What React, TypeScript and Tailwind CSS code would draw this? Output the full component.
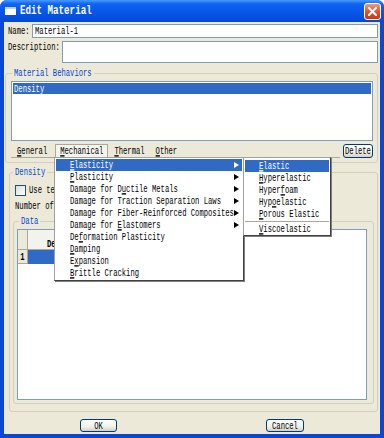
import clsx from "clsx";
import type { ReactNode } from "react";

function T({ children, className }: { children: ReactNode; className?: string }) {
  return (
    <span className={clsx("inline-block scale-y-[1.4] whitespace-pre", className)}>
      {children}
    </span>
  );
}

function Mn({ pre = "", u = "", post = "" }: { pre?: string; u?: string; post?: string }) {
  return (
    <T>
      {pre}
      {u && <u className="underline decoration-1 underline-offset-1">{u}</u>}
      {post}
    </T>
  );
}

interface MenuItem {
  pre?: string;
  u?: string;
  post?: string;
  arrow?: boolean;
  active?: boolean;
}

const MAIN_ITEMS: MenuItem[] = [
  { u: "E", post: "lasticity", arrow: true, active: true },
  { u: "P", post: "lasticity", arrow: true },
  { pre: "Damage for D", u: "u", post: "ctile Metals", arrow: true },
  { pre: "Damage for Traction Separation Laws", arrow: true },
  { pre: "Damage for Fiber-Reinforced Composites", arrow: true },
  { pre: "Damage for ", u: "E", post: "lastomers", arrow: true },
  { pre: "De", u: "f", post: "ormation Plasticity" },
  { u: "D", post: "amping" },
  { pre: "E", u: "x", post: "pansion" },
  { u: "B", post: "rittle Cracking" },
];

const SUB_ITEMS: MenuItem[] = [
  { u: "E", post: "lastic", active: true },
  { u: "H", post: "yperelastic" },
  { pre: "Hyper", u: "f", post: "oam" },
  { pre: "Hyp", u: "o", post: "elastic" },
  { u: "P", post: "orous Elastic" },
];

function Row({ item }: { item: MenuItem }) {
  return (
    <div
      className={clsx(
        "relative h-[12px] flex items-center pl-[14px]",
        item.active ? "bg-[#316AC5] text-white" : "text-black"
      )}
    >
      <Mn pre={item.pre} u={item.u} post={item.post} />
      {item.arrow && (
        <span
          className={clsx(
            "absolute right-[3px] top-[3px] w-0 h-0 border-l-[5px] border-y-[3px] border-y-transparent",
            item.active ? "border-l-white" : "border-l-black"
          )}
        />
      )}
    </div>
  );
}

function XpButton({ label, className }: { label: string; className?: string }) {
  return (
    <div
      className={clsx(
        "h-[13px] flex items-center justify-center rounded-[3px] border border-[#003C74] bg-[linear-gradient(to_bottom,#FFFFFF,#F0F0EA_60%,#D6D0C5)]",
        className
      )}
    >
      <T>{label}</T>
    </div>
  );
}

export default function App() {
  return (
    <div className="relative w-[384px] h-[438px] flex flex-col bg-[#0A46D8] rounded-t-[7px] font-['Liberation_Mono',monospace] text-[7.2px] leading-[12px] text-black overflow-hidden">
      <div className="h-[22px] shrink-0 flex items-center bg-[linear-gradient(to_bottom,#4A9BFF_0%,#0F62F2_18%,#0657E8_55%,#0349D6_100%)]">
        <div className="ml-[5px] w-[11px] h-[8px] bg-white border-t-2 border-[#BFD4FF]" />
        <span className="ml-[4px] text-white font-bold text-[9.2px]">
          <T className="scale-y-[1.3]">Edit Material</T>
        </span>
        <div className="ml-auto mr-[3px] w-[17px] h-[17px] rounded-[3px] border border-white bg-[linear-gradient(to_bottom,#F09A7C,#E2552F_50%,#C43A17)] flex items-center justify-center">
          <svg width="9" height="9" viewBox="0 0 9 9">
            <path d="M1 1 L8 8 M8 1 L1 8" stroke="white" strokeWidth="2" strokeLinecap="square" />
          </svg>
        </div>
      </div>

      <div className="flex-1 mx-[4px] mb-[4px] bg-[#ECE9D8] flex flex-col">
        <div className="mt-[2px] h-[14px] flex items-center">
          <span className="ml-[4px] w-[24px]">
            <T>Name:</T>
          </span>
          <div className="w-[346px] h-[14px] border border-[#7F9DB9] bg-white flex items-center pl-[2px]">
            <T>Material-1</T>
          </div>
        </div>

        <div className="mt-[3px] h-[22px] flex items-start">
          <span className="ml-[4px] w-[54px]">
            <T>Description:</T>
          </span>
          <div className="w-[316px] h-[22px] border border-[#7F9DB9] bg-white" />
        </div>

        <fieldset className="mt-[5px] ml-[1px] w-[373px] h-[95px] border border-[#D0D0BF] rounded-[3px]">
          <legend className="ml-[6px] px-[2px] h-[10px] leading-[10px] text-[#0046D5]">
            <T>Material Behaviors</T>
          </legend>
          <div className="mt-[3px] ml-[5px] w-[362px] h-[60px] border border-[#7F9DB9] bg-white p-[1px]">
            <div className="h-[11px] bg-[#316AC5] text-white flex items-center pl-[1px]">
              <T>Density</T>
            </div>
          </div>
          <div className="mt-[3px] ml-[5px] flex items-start">
            <div className="w-[329px] h-[14px] border-b border-[#ACA899] flex items-center">
              <span className="ml-[6px]">
                <Mn u="G" post="eneral" />
              </span>
              <span className="ml-[8px] h-[13px] px-[4px] flex items-center border border-[#ACA899] border-b-0 bg-[#F4F3EE]">
                <Mn u="M" post="echanical" />
              </span>
              <span className="ml-[6px]">
                <Mn u="T" post="hermal" />
              </span>
              <span className="ml-[11px]">
                <Mn u="O" post="ther" />
              </span>
            </div>
            <XpButton label="Delete" className="ml-[3px] w-[30px] h-[14px]" />
          </div>
        </fieldset>

        <fieldset className="mt-[4px] ml-[5px] w-[369px] h-[245px] border border-[#D0D0BF] rounded-[3px]">
          <legend className="ml-[3px] px-[2px] h-[10px] leading-[10px] text-[#0046D5]">
            <T>Density</T>
          </legend>
          <div className="mt-[7px] ml-[5px] h-[12px] flex items-center">
            <div className="w-[11px] h-[11px] border border-[#1C5180] bg-[linear-gradient(135deg,#DCDCD7,#FFFFFF)]" />
            <span className="ml-[3px] w-[26px] overflow-hidden">
              <T>Use temperature-dependent data</T>
            </span>
          </div>
          <div className="mt-[4px] ml-[5px] h-[12px] w-[39px] overflow-hidden flex items-center">
            <T>Number of field variables:</T>
          </div>
          <fieldset className="mt-[4px] ml-[3px] w-[361px] h-[188px] border border-[#D0D0BF] rounded-[3px]">
            <legend className="ml-[5px] px-[2px] h-[10px] leading-[10px] text-[#0046D5]">
              <T>Data</T>
            </legend>
            <div className="mt-[3px] ml-[3px] w-[350px] h-[171px] border border-[#7F9DB9] bg-white flex flex-col">
              <div className="h-[20px] flex">
                <div className="w-[10px] bg-[#ECE9D8] border-r border-b border-[#ACA899]" />
                <div className="w-[170px] bg-[#F3F2EC] border-r border-b border-[#ACA899] pt-[8px] font-bold">
                  <div className="ml-[19px] w-[7px] overflow-hidden">
                    <T>Density</T>
                  </div>
                </div>
              </div>
              <div className="h-[14px] flex">
                <div className="w-[10px] bg-[#ECE9D8] border-r border-b border-[#ACA899] flex items-center justify-center font-bold">
                  <T>1</T>
                </div>
                <div className="w-[170px] bg-[#316AC5]" />
              </div>
            </div>
          </fieldset>
        </fieldset>

        <div className="mt-[7px] flex">
          <XpButton label="OK" className="ml-[76px] w-[37px]" />
          <XpButton label="Cancel" className="ml-[149px] w-[38px]" />
        </div>
      </div>

      <div className="absolute left-[54px] top-[157px] w-[190px] h-[124px] bg-white border border-[#A0A0A0] border-r-[#404040] border-b-[#404040] shadow-[1px_1px_0_#808080] p-[1px]">
        {MAIN_ITEMS.map((item, i) => (
          <Row key={i} item={item} />
        ))}
      </div>

      <div className="absolute left-[243px] top-[157px] w-[88px] h-[79px] bg-white border border-[#A0A0A0] border-r-[#404040] border-b-[#404040] shadow-[1px_1px_0_#808080] pt-[2px] px-[1px]">
        {SUB_ITEMS.map((item, i) => (
          <Row key={i} item={item} />
        ))}
        <div className="my-[1px] h-[1px] bg-[#ACA899]" />
        <Row item={{ u: "V", post: "iscoelastic" }} />
      </div>
    </div>
  );
}
